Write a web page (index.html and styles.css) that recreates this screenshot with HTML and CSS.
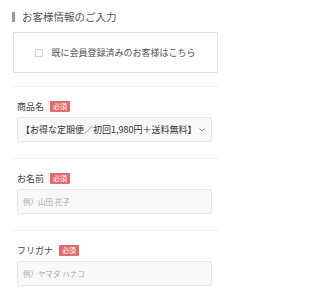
FILE: index.html
```html
<!DOCTYPE html>
<html lang="ja">
<head>
<meta charset="utf-8">
<link rel="stylesheet" href="styles.css">
</head>
<body>
<div class="wrap">
  <h2 class="heading"><span class="bar"></span><span>お客様情報のご入力</span></h2>
  <div class="member-box">
    <span class="check"></span>
    <span class="member-text">既に会員登録済みのお客様はこちら</span>
  </div>
  <div class="section">
    <div class="label-row"><span class="label">商品名</span><span class="badge">必須</span></div>
    <div class="select">
      <span class="select-text">【お得な定期便／初回1,980円＋送料無料】</span>
      <svg class="chev" width="6" height="4" viewBox="0 0 6 4"><path d="M0.5 0.5 L3 3 L5.5 0.5" fill="none" stroke="#777" stroke-width="0.8"/></svg>
    </div>
  </div>
  <div class="section">
    <div class="label-row"><span class="label">お名前</span><span class="badge">必須</span></div>
    <div class="input"><span class="ph">例）山田 花子</span></div>
  </div>
  <div class="section">
    <div class="label-row"><span class="label">フリガナ</span><span class="badge">必須</span></div>
    <div class="input"><span class="ph">例）ヤマダ ハナコ</span></div>
  </div>
</div>
</body>
</html>
```
FILE: styles.css
```css
html, body {
  margin: 0;
  padding: 0;
  background: #fff;
}
body {
  font-family: "Noto Sans CJK JP", "Noto Sans", sans-serif;
  color: #444;
}
.wrap {
  padding: 12px 13px 0;
  width: 205px;
}
.heading {
  display: flex;
  align-items: center;
  gap: 7px;
  margin: 0 0 10px;
  height: 10px;
  font-size: 10.5px;
  font-weight: normal;
  color: #555;
  line-height: 10px;
}
.bar {
  display: block;
  width: 3px;
  height: 10px;
  background: #999;
  margin-left: -1px;
}
.member-box {
  box-sizing: border-box;
  height: 41px;
  border: 1px solid #e2e2e2;
  display: flex;
  align-items: center;
  justify-content: center;
  gap: 8px;
  margin-bottom: 13px;
}
.check {
  box-sizing: border-box;
  width: 8px;
  height: 8px;
  border: 1px solid #d6d6d6;
  background: #fafafa;
}
.member-text {
  font-size: 9px;
  line-height: 10px;
  color: #555;
}
.section {
  border-top: 1px solid #eee;
  padding: 14px 6px 16px 4px;
  display: flex;
  flex-direction: column;
  gap: 5px;
}
.label-row {
  display: flex;
  align-items: center;
  gap: 6px;
  height: 11px;
}
.label {
  font-size: 9px;
  line-height: 11px;
  color: #444;
}
.badge {
  display: block;
  height: 11px;
  padding: 0 3px;
  background: #e26b6b;
  color: #fff;
  font-size: 7px;
  line-height: 11px;
  border-radius: 1px;
}
.select, .input {
  box-sizing: border-box;
  height: 25px;
  border: 1px solid #e6e6e6;
  background: #f8f8f8;
  border-radius: 2px;
  display: flex;
  align-items: center;
}
.select {
  padding: 0 6px 0 3px;
  justify-content: space-between;
}
.select-text {
  font-size: 9px;
  line-height: 10px;
  color: #333;
  white-space: nowrap;
}
.chev {
  display: block;
}
.input {
  padding: 0 5px;
}
.ph {
  font-size: 7.5px;
  line-height: 10px;
  color: #aaa;
}
```
